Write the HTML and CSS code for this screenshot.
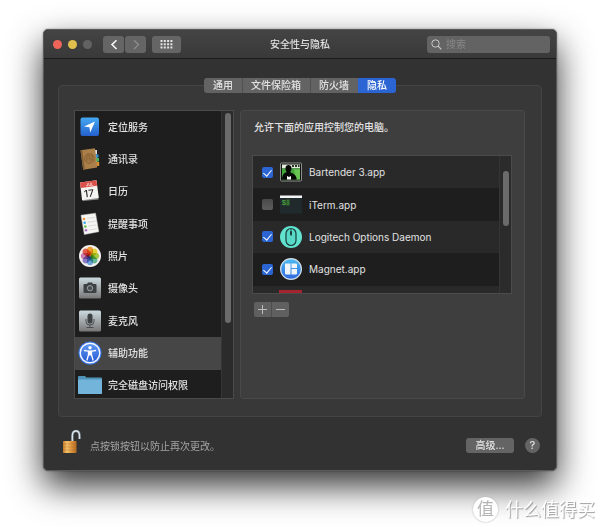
FILE: index.html
```html
<!DOCTYPE html>
<html lang="zh-CN">
<head>
    <meta charset="UTF-8">
    <meta name="viewport" content="width=device-width, initial-scale=1.0">
    <title>安全性与隐私</title>
    <link rel="stylesheet" href="styles.css">
</head>
<body>
    <div class="window">
        <header class="titlebar">
            <div class="toolbar">
                <div class="lights">
                    <button class="light close" aria-label="关闭"></button>
                    <button class="light minimize" aria-label="最小化"></button>
                    <button class="light" aria-label="缩放" disabled></button>
                </div>
                <div class="nav">
                    <button class="tool" aria-label="后退">
                        <svg width="20" height="17" viewBox="0 0 20 17"><path d="M12.500 4.200 8 8.600l4.500 4.400" fill="none" stroke="#f4f4f4" stroke-width="1.600"/></svg>
                    </button>
                    <button class="tool" aria-label="前进">
                        <svg width="20" height="17" viewBox="0 0 20 17"><path d="M8 4.200 12.500 8.600 8 13" fill="none" stroke="#8e8e8e" stroke-width="1.300"/></svg>
                    </button>
                </div>
                <button class="tool grid-btn" aria-label="全部显示">
                    <svg width="13" height="9" viewBox="0 0 13 9" fill="#e4e4e4">
                        <path d="M.5 0h2v2h-2zM3.800 0h2v2h-2zM7.100 0h2v2h-2zM10.400 0h2v2h-2zM.5 3.300h2v2h-2zM3.800 3.300h2v2h-2zM7.100 3.300h2v2h-2zM10.400 3.300h2v2h-2zM.5 6.600h2v2h-2zM3.800 6.600h2v2h-2zM7.100 6.600h2v2h-2zM10.400 6.600h2v2h-2z"/>
                    </svg>
                </button>
            </div>
            <h1>安全性与隐私</h1>
            <label class="search">
                <svg width="11" height="11" viewBox="0 0 11 11" fill="none" stroke="#c8c8c8"><circle cx="4.500" cy="4.500" r="3.700"/><path d="M7.200 7.200 10.300 10.300" stroke-width="1.200"/></svg>
                <input type="text" placeholder="搜索" aria-label="搜索">
            </label>
        </header>

        <main class="content">
            <nav class="tabs">
                <button>通用</button>
                <button>文件保险箱</button>
                <button>防火墙</button>
                <button class="active">隐私</button>
            </nav>

            <div class="panel">
                <div class="sidebar scroll-box">
                    <ul class="services">
                        <li><button>
                            <svg width="24" height="24" viewBox="0 0 24 24">
                                <defs><linearGradient id="loc" x2="0" y2="1"><stop stop-color="#45a9f2"/><stop offset="1" stop-color="#2460cd"/></linearGradient></defs>
                                <rect x="2.500" y="2.500" width="18.500" height="18.500" rx="2" fill="url(#loc)"/>
                                <path d="M17 6.500 12.200 17.500 11.500 12.200 6 11.500z" fill="#fff"/>
                            </svg>定位服务</button></li>
                        <li><button>
                            <svg width="24" height="24" viewBox="0 0 24 24">
                                <path d="M17 3h2v4h-2z" fill="#ddd"/><path d="m18 4 1.500 15H16z" fill="#eee"/>
                                <path d="M18 7.500h2.500v3H18z" fill="#3a9ad9"/><path d="M18 11h3v3.500h-3z" fill="#50b45a"/><path d="M18 15h3.200v4H18z" fill="#d98b32"/>
                                <path d="m2.500 3.200 14.500-2 2.200 19.300-14 2.300z" fill="#aa7f49"/>
                                <path d="m2.500 3.200 1.800-.3 2.500 19.600-1.600.3z" fill="#836035"/>
                                <circle cx="11.300" cy="11.500" r="5" fill="#9f7544" stroke="#8c6537" stroke-width=".8"/>
                                <path d="M8 14c0-2 .8-1.500 1.600-2.300C8 10 8.500 8 10 8s2 2 .9 3.700C12 12.500 13 12 13 14M12 8c3-.8 3 2.200 1.500 3.700 1 .5 1.500 1 1.600 2" fill="none" stroke="#85602f" stroke-width=".8"/>
                            </svg>通讯录</button></li>
                        <li><button>
                            <svg width="24" height="24" viewBox="0 0 24 24">
                                <path d="m4 20 16-1 .8 1.500L5 22z" fill="#8d8d8d"/>
                                <path d="m2 3.500 16.500-2.200 2.300 17.700-16.700 2.300z" fill="#f4f3ef"/>
                                <path d="m2 3.500 16.500-2.200.7 5.500-16.500 2.200z" fill="#db5149"/>
                                <text x="8" y="7" class="cal-month" transform="rotate(-7 11 6)">JUL</text>
                                <text x="6" y="18" class="cal-day" transform="rotate(-7 11 14)">17</text>
                            </svg>日历</button></li>
                        <li><button>
                            <svg width="24" height="24" viewBox="0 0 24 24">
                                <path d="m3 3.200 14.500-2 3.300 18.500-14.500 2.800z" fill="#f5f5f2" stroke="#ccc" stroke-width=".5"/>
                                <path d="m9 6.500 8-1.100M9.700 10.300l8-1.200M10.400 14.200l8-1.300M11 18l8-1.300" stroke="#cfcfcf" stroke-width=".7"/>
                                <circle cx="6" cy="7" r="1.300" fill="#f09438"/><circle cx="6.700" cy="10.800" r="1.300" fill="#38a5ee"/><circle cx="7.300" cy="14.600" r="1.300" fill="#69c456"/><circle cx="8" cy="18.300" r="1.300" fill="#ad70c6"/>
                            </svg>提醒事项</button></li>
                        <li><button>
                            <svg width="24" height="24" viewBox="0 0 24 24">
                                <circle cx="12" cy="12" r="11" fill="#f3f1ed"/>
                                <g class="petals">
                                    <rect x="9" y="2.800" width="6" height="9" rx="3" fill="#f6a43c"/>
                                    <rect x="9" y="2.800" width="6" height="9" rx="3" fill="#ecdf3c" transform="rotate(45 12 12)"/>
                                    <rect x="9" y="2.800" width="6" height="9" rx="3" fill="#b2d548" transform="rotate(90 12 12)"/>
                                    <rect x="9" y="2.800" width="6" height="9" rx="3" fill="#6ac3a0" transform="rotate(135 12 12)"/>
                                    <rect x="9" y="2.800" width="6" height="9" rx="3" fill="#73aeea" transform="rotate(180 12 12)"/>
                                    <rect x="9" y="2.800" width="6" height="9" rx="3" fill="#9080ce" transform="rotate(225 12 12)"/>
                                    <rect x="9" y="2.800" width="6" height="9" rx="3" fill="#d284bb" transform="rotate(270 12 12)"/>
                                    <rect x="9" y="2.800" width="6" height="9" rx="3" fill="#ec6250" transform="rotate(315 12 12)"/>
                                </g>
                            </svg>照片</button></li>
                        <li><button>
                            <svg width="24" height="24" viewBox="0 0 24 24">
                                <defs><linearGradient id="steel" x2="0" y2="1"><stop stop-color="#cbdbe0"/><stop offset=".5" stop-color="#a3a9ab"/><stop offset="1" stop-color="#767677"/></linearGradient></defs>
                                <rect x="1" y="1.500" width="22" height="21" rx="1.500" fill="url(#steel)"/>
                                <path d="M6.500 8H9l1-1.500h4L15 8h2.500q1 0 1 1v7q0 1-1 1h-11q-1 0-1-1V9q0-1 1-1z" fill="#3c4143"/>
                                <circle cx="12" cy="12.200" r="2.700" fill="#4b5052" stroke="#a3a9ab" stroke-width=".9"/>
                            </svg>摄像头</button></li>
                        <li><button>
                            <svg width="24" height="24" viewBox="0 0 24 24">
                                <rect x="1" y="1.500" width="22" height="21" rx="1.500" fill="url(#steel)"/>
                                <rect x="9.500" y="4.500" width="5" height="10" rx="2.500" fill="#3c4143"/>
                                <path d="M8 10v2.500q0 3.500 4 3.500t4-3.500V10M12 16v2.500M8.500 18.500h7" fill="none" stroke="#484c4e"/>
                            </svg>麦克风</button></li>
                        <li class="selected"><button>
                            <svg width="24" height="24" viewBox="0 0 24 24">
                                <defs><linearGradient id="acc" x2="0" y2="1"><stop stop-color="#629af3"/><stop offset="1" stop-color="#2459d2"/></linearGradient></defs>
                                <circle cx="12" cy="12" r="11.500" fill="#3977e5"/>
                                <circle cx="12" cy="12" r="9.800" fill="url(#acc)" stroke="#f5f8ff" stroke-width="1.400"/>
                                <circle cx="12" cy="6.800" r="1.700" fill="#fff"/>
                                <path d="m6.500 9.500 4 .7v3.500L9 19M17.500 9.500l-4 .7v3.500L15 19" fill="none" stroke="#fff" stroke-width="1.300" stroke-linecap="round"/>
                                <path d="M10 9.500h4v5h-4z" fill="#fff"/>
                            </svg>辅助功能</button></li>
                        <li><button>
                            <svg width="24" height="24" viewBox="0 0 24 24">
                                <path d="M0 4q0-1 1-1h6l1.500 1.500H23q1 0 1 1V20q0 1-1 1H1q-1 0-1-1z" fill="#4f93b8"/>
                                <path d="M0 6.500h24V20q0 1-1 1H1q-1 0-1-1z" fill="#73b5da"/>
                            </svg>完全磁盘访问权限</button></li>
                    </ul>
                    <div class="track"><span class="thumb"></span></div>
                </div>

                <section class="detail">
                    <p>允许下面的应用控制您的电脑。</p>
                    <div class="apps-box scroll-box">
                        <ul class="apps">
                            <li><label>
                                <input type="checkbox" checked>
                                <svg width="22" height="22" viewBox="0 0 22 22">
                                    <rect x=".5" y="2" width="21" height="18" rx="1" fill="#101310" stroke="#8c918c"/>
                                    <path d="M2 3.500h18v4H2z" fill="#e2ebdd"/><path d="M2 7.500h18v11H2z" fill="#42a53a"/><path d="M14 8.500h6v10h-4z" fill="#68c553"/>
                                    <path d="M12 4h2v2h-2zM15 4h2v2h-2zM18 4h1.500v2H18z" fill="#263225"/>
                                    <path d="M5.500 7c0-4 6-4 6 0 0 2-.7 3-1.300 4 1 1.500 5.800 1 6.600 7.500H2c.3-5 2-6.500 4.700-7.500C6 10 5.500 9 5.500 7z" fill="#070907"/>
                                    <path d="m7 15 2 1 2-1v3.500H7z" fill="#fff"/>
                                </svg>
                                Bartender 3.app</label></li>
                            <li><label>
                                <input type="checkbox">
                                <svg width="22" height="22" viewBox="0 0 22 22">
                                    <path d="M0 1.500h22v18H0z" fill="#202a2d"/><path d="M0 1.500h22v2.500H0z" fill="#f4f4f4"/>
                                    <text x="1.500" y="11" class="prompt">$</text><path d="M6.500 5.500h3v6h-3z" fill="#34742e"/>
                                </svg>
                                iTerm.app</label></li>
                            <li><label>
                                <input type="checkbox" checked>
                                <svg width="22" height="22" viewBox="0 0 22 22">
                                    <circle cx="11" cy="11" r="11" fill="#62e3d0"/>
                                    <rect x="6" y="2.500" width="10" height="17" rx="5" fill="#58d8c6" stroke="#173d39" stroke-width="1.200"/>
                                    <path d="M11 3v7" stroke="#173d39" stroke-width=".8"/><rect x="10" y="5" width="2" height="4" rx="1" fill="#173d39"/>
                                </svg>
                                Logitech Options Daemon</label></li>
                            <li><label>
                                <input type="checkbox" checked>
                                <svg width="22" height="22" viewBox="0 0 22 22">
                                    <defs><linearGradient id="mag" x2="0" y2="1"><stop stop-color="#4dbdf5"/><stop offset="1" stop-color="#2d65df"/></linearGradient></defs>
                                    <circle cx="11" cy="11" r="10.400" fill="url(#mag)" stroke="#d5dfe8" stroke-width="1.200"/>
                                    <path d="M5 5.500h5.500v11H6q-1 0-1-1zM11.500 5.500H16q1 0 1 1v3.500h-5.500zM11.500 11H17v4.500q0 1-1 1h-4.500z" fill="#eef4f7"/>
                                </svg>
                                Magnet.app</label></li>
                            <li><span class="next-app"></span></li>
                        </ul>
                        <div class="track"><span class="thumb"></span></div>
                    </div>
                    <div class="edit">
                        <button aria-label="添加"><svg width="9" height="9" viewBox="0 0 9 9"><path d="M4.500 0v9M0 4.500h9" stroke="#bcbcbc"/></svg></button>
                        <button aria-label="移除"><svg width="9" height="9" viewBox="0 0 9 9"><path d="M0 4.500h9" stroke="#bcbcbc"/></svg></button>
                    </div>
                </section>
            </div>
        </main>

        <footer class="bottom">
            <button class="lock" aria-label="锁定">
                <svg width="24" height="26" viewBox="0 0 24 26">
                    <defs><linearGradient id="gold"><stop stop-color="#c87b28"/><stop offset=".3" stop-color="#f3c26e"/><stop offset=".6" stop-color="#df9740"/><stop offset="1" stop-color="#b06b24"/></linearGradient></defs>
                    <path d="M12.500 13V6.500C12.500.5 19.500.5 19.500 6.500V10" fill="none" stroke="#6f7c84" stroke-width="2.600"/>
                    <path d="M12.300 12.500V6.500C12.500.5 19.300.5 19.500 6.500V10" fill="none" stroke="#dbe5ea" stroke-width="1.300"/>
                    <rect x="3" y="12" width="13.500" height="12" rx=".8" fill="url(#gold)"/>
                    <path d="M3 15h13.500M3 18h13.500M3 21h13.500" stroke="#a96621" stroke-opacity=".5" stroke-width=".7"/>
                </svg>
            </button>
            <p>点按锁按钮以防止再次更改。</p>
            <button class="advanced">高级...</button>
            <button class="help" aria-label="帮助">?</button>
        </footer>
    </div>

    <div class="watermark"><span>值</span>什么值得买</div>
</body>
</html>
```

FILE: styles.css
```css
* {
    box-sizing: border-box;
}
body {
    margin: 0;
    padding: 29px 43px 56px;
    background: #fff;
    color: #e2e2e2;
    font-family: Inter, "Noto Sans CJK SC", sans-serif;
    font-size: 10px;
    font-weight: 500;
    line-height: 14px;
}
h1, p, ul {
    margin: 0;
    padding: 0;
}
ul {
    list-style: none;
}
svg {
    display: block;
    flex: none;
}
button {
    border: 0;
    padding: 0;
    background: none;
    color: inherit;
    font: inherit;
}
.window {
    background: #323232;
    border: 1px solid #5a5a5a;
    border-radius: 5px;
    box-shadow: 0 15px 34px rgba(0,0,0,0.8), 0 0 2px rgba(0,0,0,0.4);
}

/* title bar */
.titlebar {
    display: grid;
    grid-template-columns: 1fr auto 1fr;
    align-items: center;
    height: 29px;
    padding: 0 6px;
    background: linear-gradient(#444, #393939);
    border-bottom: 1px solid #1b1b1b;
    border-radius: 4px 4px 0 0;
}
.titlebar h1 {
    font-size: 10px;
    font-weight: 500;
}
.toolbar, .lights, .nav {
    display: flex;
    align-items: center;
}
.toolbar {
    padding-left: 3px;
}
.lights {
    gap: 6px;
    margin-right: 11px;
}
.light {
    width: 9px;
    height: 9px;
    border-radius: 50%;
    background: #626262;
}
.light.close {
    background: #ee6459;
}
.light.minimize {
    background: #e0bf4c;
}
.nav {
    gap: 1px;
    margin-right: 6px;
}
.tool {
    display: flex;
    align-items: center;
    justify-content: center;
    width: 21px;
    height: 17px;
    border-radius: 3px;
    background: #656565;
}
.grid-btn {
    width: 29px;
}
.search {
    display: flex;
    align-items: center;
    justify-self: end;
    gap: 4px;
    width: 123px;
    height: 17px;
    padding: 0 4px;
    border-radius: 3px;
    background: #636363;
}
.search input {
    min-width: 0;
    flex: 1;
    padding: 0;
    border: 0;
    outline: 0;
    background: none;
    color: #eee;
    font: inherit;
    font-weight: 400;
}
.search input::placeholder {
    color: #888;
}

/* tabs and panel */
.content {
    padding: 19px 14px 0;
}
.tabs {
    display: flex;
    justify-content: center;
    position: relative;
    margin-bottom: -8px;
}
.tabs button {
    height: 15px;
    padding: 0 9px;
    background: #636363;
    line-height: 15px;
}
.tabs button + button {
    padding-left: 8px;
    border-left: 1px solid #505050;
}
.tabs button:first-child {
    border-radius: 3px 0 0 3px;
}
.tabs .active {
    border-radius: 0 3px 3px 0;
    background: #2b65d4;
    color: #fff;
}
.tabs button + .active {
    border-left-color: #2b65d4;
}
.panel {
    display: flex;
    gap: 6px;
    padding: 24px 16px 17px 15px;
    background: #383838;
    border: 1px solid #444;
    border-radius: 4px;
}
.scroll-box {
    display: flex;
    overflow: hidden;
    background: #1e1e1e;
    border: 1px solid #4b4b4b;
}
.track {
    flex: none;
    width: 12px;
    background: #2b2b2b;
    border-left: 1px solid #353535;
}
.thumb {
    display: block;
    width: 6px;
    margin: 2px auto;
    border-radius: 3px;
    background: #6b6b6b;
}
.sidebar {
    flex: none;
    width: 160px;
    height: 289px;
}
.sidebar .thumb {
    height: 210px;
}
.services, .apps {
    display: grid;
    flex: 1;
    grid-auto-rows: 1fr;
}
.services {
    height: 291px;
}
.services button {
    display: flex;
    align-items: center;
    gap: 6px;
    width: 100%;
    height: 100%;
    padding: 0 0 1px 3px;
}
.services .selected {
    background: #464646;
}
.petals rect {
    mix-blend-mode: multiply;
}
.cal-month {
    fill: #fff;
    font-size: 4px;
}
.cal-day {
    fill: #222;
    font-size: 10px;
}

/* app list */
.detail {
    flex: 1;
    min-width: 0;
    padding: 9px 12px 9px 11px;
    background: #3e3e3e;
    border: 1px solid #494949;
    border-radius: 3px;
}
.detail p {
    padding-left: 2px;
}
.apps-box {
    height: 139px;
    margin: 21px 0 8px;
}
.apps {
    height: 162px;
}
.apps li:nth-child(odd) {
    background: #292929;
}
.apps label {
    display: flex;
    align-items: center;
    height: 100%;
    padding-left: 9px;
    gap: 7px;
    font-weight: 400;
}
.apps input {
    appearance: none;
    display: flex;
    justify-content: center;
    width: 11px;
    height: 11px;
    margin: 0;
    border-radius: 2px;
    background: linear-gradient(#4a4a4a, #5c5c5c);
}
.apps input:checked {
    background: #2b65d4;
}
.apps input:checked::before {
    content: "";
    width: 4px;
    height: 7px;
    margin-top: 1px;
    border: solid #fff;
    border-width: 0 1px 1px 0;
    transform: rotate(40deg);
}
.apps-box .thumb {
    height: 55px;
    margin-top: 15px;
}
.prompt {
    fill: #50b544;
    font-family: "Liberation Mono", monospace;
    font-size: 8px;
}
.next-app {
    display: block;
    width: 23px;
    height: 22px;
    margin: 4px 0 0 26px;
    background: #a5242f;
}
.edit {
    display: flex;
    padding-left: 2px;
}
.edit button {
    display: flex;
    align-items: center;
    justify-content: center;
    width: 17px;
    height: 15px;
    border-radius: 2px 0 0 2px;
    background: #606060;
}
.edit button + button {
    width: 18px;
    border-left: 1px solid #4d4d4d;
    border-radius: 0 2px 2px 0;
}

/* footer */
.bottom {
    display: flex;
    align-items: center;
    height: 53px;
    padding: 4px 16px 0;
}
.lock {
    margin-right: 6px;
    padding-bottom: 7px;
}
.bottom p {
    flex: 1;
    color: #a4a4a4;
    font-weight: 400;
}
.advanced {
    width: 48px;
    height: 15px;
    margin-right: 11px;
    border-radius: 3px;
    background: #646464;
    line-height: 15px;
}
.help {
    width: 15px;
    height: 15px;
    border-radius: 50%;
    background: #646464;
    font-size: 11px;
    line-height: 15px;
}
.watermark {
    position: absolute;
    right: 5px;
    bottom: 5px;
    display: flex;
    align-items: center;
    gap: 7px;
    color: #fff;
    font-size: 18px;
    font-weight: 400;
    line-height: 25px;
    text-shadow: 1px 1px 1px #999;
}
.watermark span {
    width: 25px;
    height: 25px;
    border-radius: 50%;
    background: #fff;
    box-shadow: 0 0 2px #aaa;
    color: #b5b5b5;
    font-size: 17px;
    line-height: 24px;
    text-align: center;
    text-shadow: none;
}
```
